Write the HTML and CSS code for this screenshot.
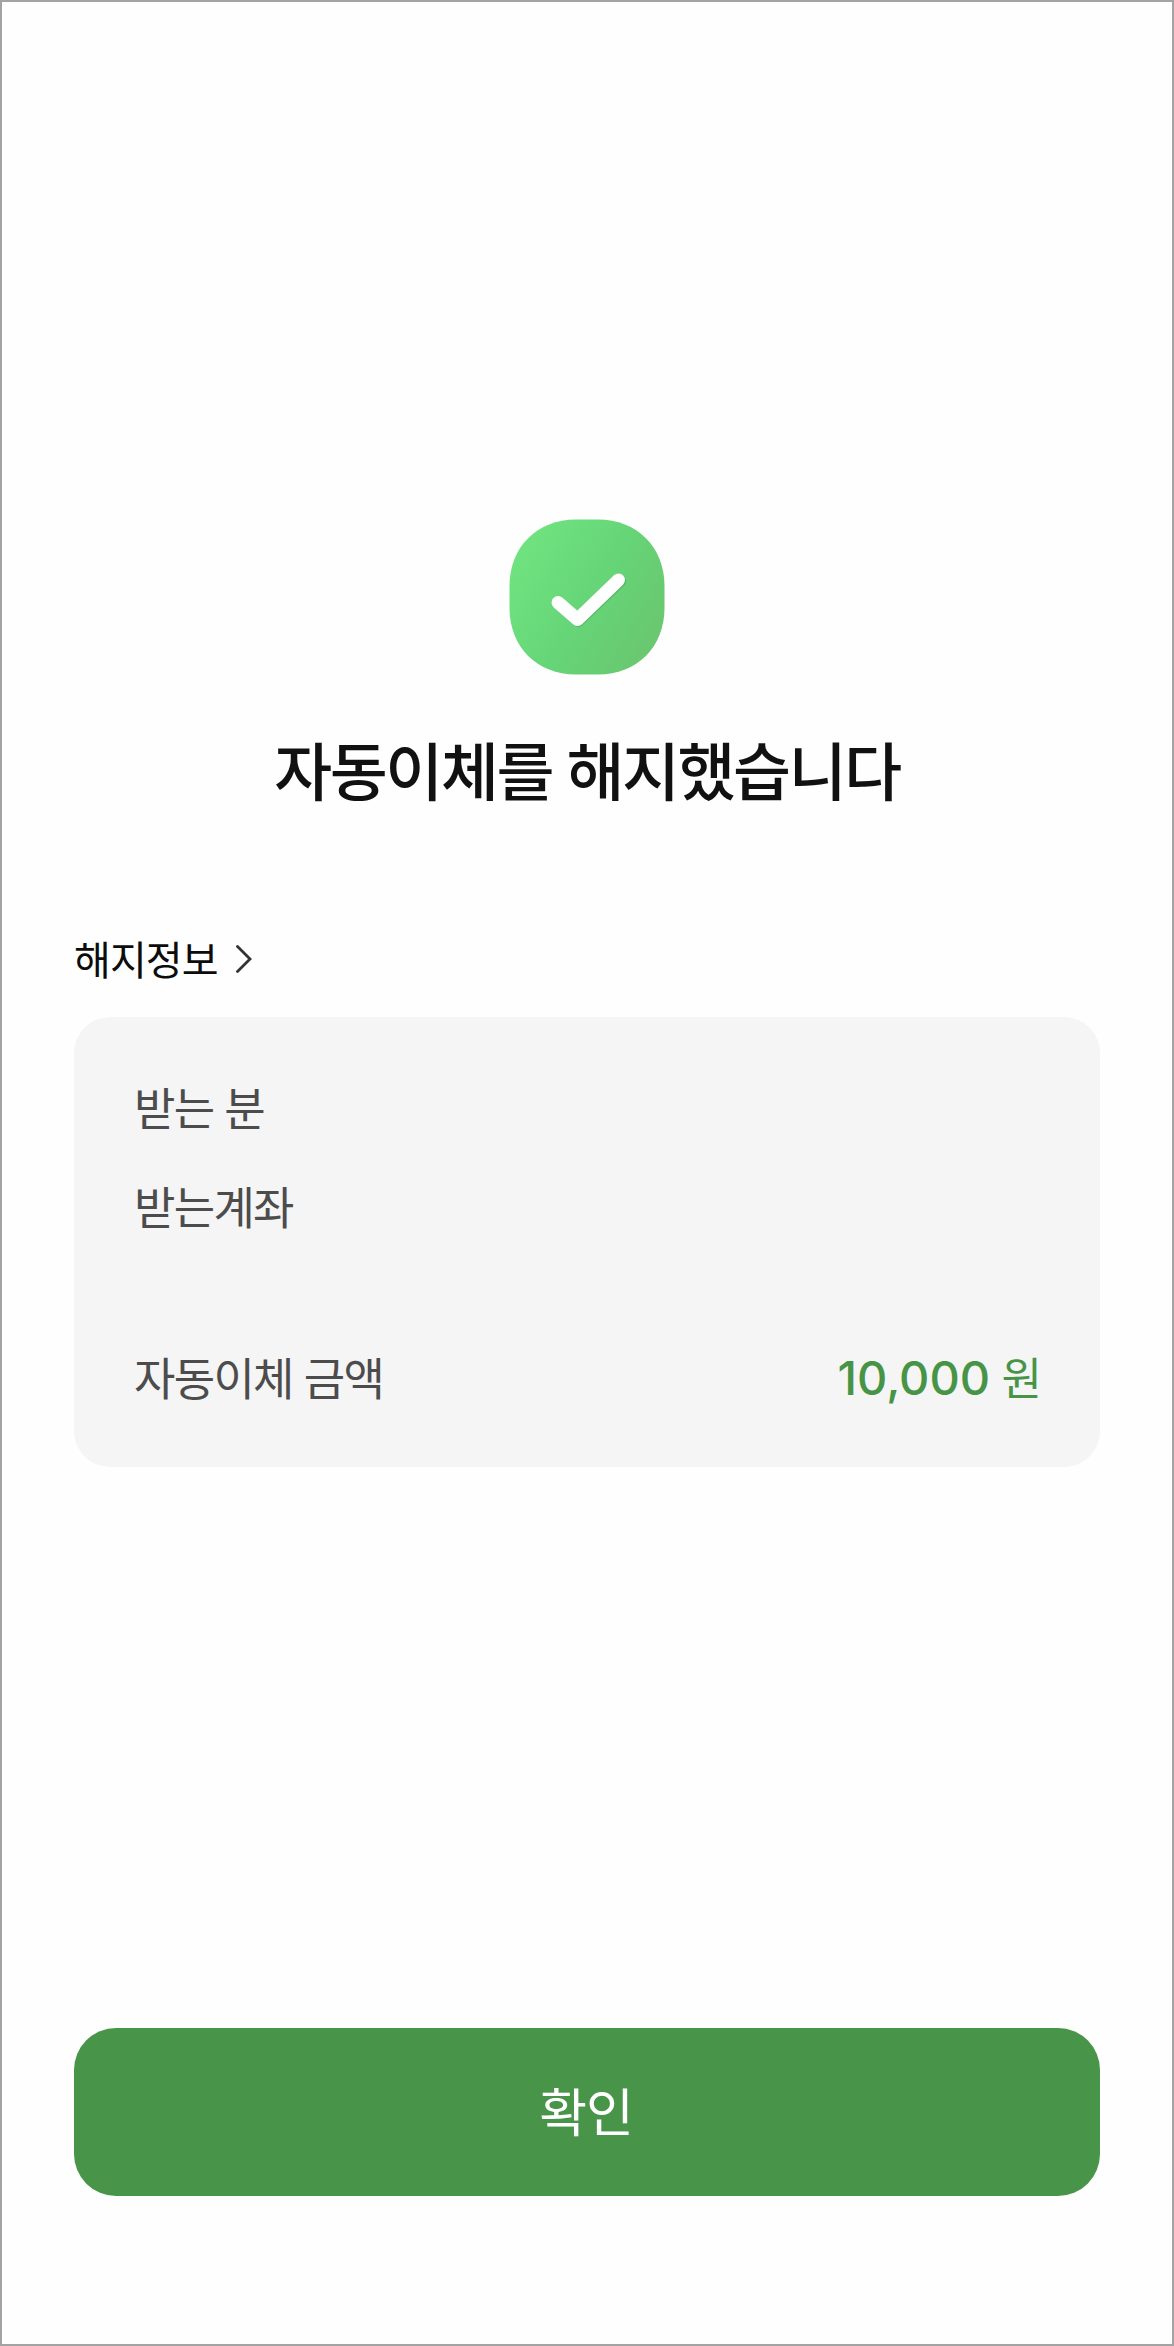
FILE: index.html
```html
<!DOCTYPE html>
<html lang="ko">
<head>
<meta charset="utf-8">
<title>자동이체 해지</title>
<link rel="stylesheet" href="styles.css">
</head>
<body>
<main class="screen">
  <svg class="badge" viewBox="0 0 156 156" aria-hidden="true">
    <defs><linearGradient id="g" x1="0.05" y1="0.3" x2="0.9" y2="0.8"><stop offset="0" stop-color="#6fe27f"/><stop offset="0.5" stop-color="#66d578"/><stop offset="1" stop-color="#69c870"/></linearGradient></defs>
    <path fill="url(#g)" d="M67 .5H89C128 .5 155.500 28 155.500 67V89C155.500 128 128 155.500 89 155.500H67C28 155.500 .5 128 .5 89V67C.5 28 28 .5 67 .5Z"/>
    <g fill="none" stroke-width="13" stroke-linecap="round" stroke-linejoin="round">
      <path stroke="#459c52" stroke-opacity=".5" d="M50 84.500L69 101.500L110.500 62"/>
      <path stroke="#fff" d="M49 83.500L68.500 100.500L109.500 61"/>
    </g>
  </svg>
  <h1 class="title">자동이체를 해지했습니다</h1>
  <h2 class="section"><span>해지정보</span>
    <svg class="chevron" viewBox="0 0 16 28" aria-hidden="true"><path d="M1.500 1.500L14 14L1.500 26.500" fill="none" stroke="#333" stroke-width="2.8" stroke-linecap="round"/></svg>
  </h2>
  <dl class="card">
    <div class="row"><dt>받는 분</dt><dd></dd></div>
    <div class="row row-account"><dt>받는계좌</dt><dd></dd></div>
    <div class="row"><dt>자동이체 금액</dt><dd><span class="amount">10,000</span> 원</dd></div>
  </dl>
  <button class="confirm" type="button">확인</button>
</main>
</body>
</html>
```
FILE: styles.css
```css
* { box-sizing: border-box; }
body { margin: 0; font-family: Inter, "Noto Sans CJK KR", sans-serif; background: #fefefe; }
.screen { height: 2346px; border: 2px solid #a3a3a3; padding: 517px 72px 0; display: flex; flex-direction: column; }
.badge { width: 156px; height: 156px; align-self: center; }
.title { margin: 49px 0 0; height: 96px; line-height: 96px; text-align: center; font-size: 63px; font-weight: 500; letter-spacing: -2.4px; color: #111; white-space: nowrap; }
.section { margin: 108px 0 0; height: 60px; display: flex; align-items: center; gap: 18px; font-size: 40px; font-weight: 400; letter-spacing: -0.9px; color: #0c0c0c; }
.chevron { width: 16px; height: 28px; position: relative; top: 1px; }
.card { margin: 29px 0 0; height: 450px; padding: 54px 58px 0 60px; border-radius: 36px; background: #f5f5f5; font-size: 45px; letter-spacing: -1.7px; color: #4c4c4c; }
.row { height: 70px; margin-bottom: 29px; display: flex; justify-content: space-between; align-items: center; }
.row-account { margin-bottom: 101px; }
dd { margin: 0; color: #479447; font-weight: 400; font-size: 44px; letter-spacing: 0; word-spacing: -1px; }
.amount { font-size: 47px; font-weight: 500; }
.confirm { margin: 561px 0 0; height: 168px; border: 0; padding: 0 2px 5px 0; border-radius: 42px; background: #489448; color: #fff; font-family: inherit; font-size: 52px; letter-spacing: -1px; }
```
